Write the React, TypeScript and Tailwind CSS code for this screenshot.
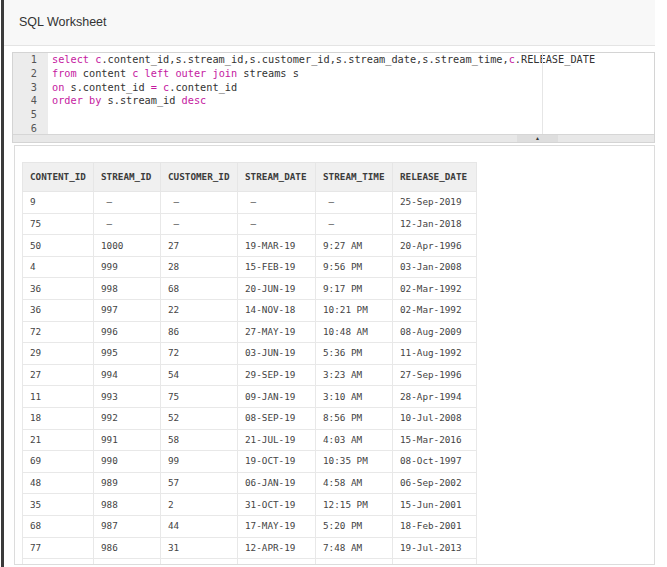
import React from 'react';

const rows: string[][] = [
    ['9', '-', '-', '-', '-', '25-Sep-2019'],
    ['75', '-', '-', '-', '-', '12-Jan-2018'],
    ['50', '1000', '27', '19-MAR-19', '9:27 AM', '20-Apr-1996'],
    ['4', '999', '28', '15-FEB-19', '9:56 PM', '03-Jan-2008'],
    ['36', '998', '68', '20-JUN-19', '9:17 PM', '02-Mar-1992'],
    ['36', '997', '22', '14-NOV-18', '10:21 PM', '02-Mar-1992'],
    ['72', '996', '86', '27-MAY-19', '10:48 AM', '08-Aug-2009'],
    ['29', '995', '72', '03-JUN-19', '5:36 PM', '11-Aug-1992'],
    ['27', '994', '54', '29-SEP-19', '3:23 AM', '27-Sep-1996'],
    ['11', '993', '75', '09-JAN-19', '3:10 AM', '28-Apr-1994'],
    ['18', '992', '52', '08-SEP-19', '8:56 PM', '10-Jul-2008'],
    ['21', '991', '58', '21-JUL-19', '4:03 AM', '15-Mar-2016'],
    ['69', '990', '99', '19-OCT-19', '10:35 PM', '08-Oct-1997'],
    ['48', '989', '57', '06-JAN-19', '4:58 AM', '06-Sep-2002'],
    ['35', '988', '2', '31-OCT-19', '12:15 PM', '15-Jun-2001'],
    ['68', '987', '44', '17-MAY-19', '5:20 PM', '18-Feb-2001'],
    ['77', '986', '31', '12-APR-19', '7:48 AM', '19-Jul-2013'],
    ['', '', '', '', '', ''],
];

const headers = ['CONTENT_ID', 'STREAM_ID', 'CUSTOMER_ID', 'STREAM_DATE', 'STREAM_TIME', 'RELEASE_DATE'];
const widths = ['w-[71px]', 'w-[67px]', 'w-[77px]', 'w-[78px]', 'w-[77px]', 'w-[84px]'];

const K = ({ children }: { children: React.ReactNode }) => <span className="text-[#c5199f]">{children}</span>;

function App() {
    const code = [
        <><K>select</K> <K>c</K>.content_id,s.stream_id,s.customer_id,s.stream_date,s.stream_time,<K>c</K>.RELEASE_DATE</>,
        <><K>from</K> content <K>c</K> <K>left</K> <K>outer</K> <K>join</K> streams s</>,
        <><K>on</K> s.content_id <K>=</K> <K>c</K>.content_id</>,
        <><K>order</K> <K>by</K> s.stream_id <K>desc</K></>,
        <></>,
        <></>,
    ];

    return (
        <div className="h-[567px] w-[667px] bg-white flex overflow-hidden">
            <div className="w-[1px]" />
            <div className="w-[3px] bg-[#3b3b3b]" />
            <div className="w-[651px] flex flex-col">
                {/* header */}
                <div className="h-[46px] bg-[#f8f8f8] border-b border-[#e4e4e4] flex items-center pl-[15px] shrink-0">
                    <span className="text-[12.5px] text-[#333] font-['Liberation_Sans',Arial,sans-serif]">SQL Worksheet</span>
                </div>

                {/* editor */}
                <div className="ml-[8px] mt-[6px] border border-[#d4d4d4] flex flex-col shrink-0">
                    <div className="flex relative h-[81px] font-['DejaVu_Sans_Mono',monospace] text-[10.25px] leading-[13.8px]">
                        <div className="w-[35px] bg-[#ececec] text-[#555] text-right pr-[11px]">
                            {code.map((_, i) => (
                                <div key={i}>{i + 1}</div>
                            ))}
                        </div>
                        <div className="flex-1 pl-[4px] text-[#333] whitespace-pre relative">
                            {code.map((c, i) => (
                                <div key={i} className="h-[13.8px]">{c}</div>
                            ))}
                            <div className="absolute top-0 bottom-0 left-[494px] w-px bg-[#e6e6e6]" />
                        </div>
                    </div>
                    <div className="h-[8px] bg-[#e8e8e8] border-t border-[#d6d6d6] flex">
                        <div className="w-[504px]" />
                        <div className="w-[41px] bg-[#dedede] flex items-center justify-center">
                            <span className="text-[5px] leading-none text-[#333]">▲</span>
                        </div>
                    </div>
                </div>

                {/* results */}
                <div className="ml-[10px] mt-[2px] h-[420px] border border-[#dcdcdc] overflow-hidden pl-[7px] pt-[16px] shrink-0">
                    <table className="table-fixed border-collapse font-['DejaVu_Sans_Mono',monospace] text-[9.3px] text-[#444]">
                        <colgroup>
                            {widths.map((w, i) => (
                                <col key={i} className={w} />
                            ))}
                        </colgroup>
                        <thead>
                            <tr className="h-[29px] bg-[#f0f0f0]">
                                {headers.map(h => (
                                    <th key={h} className="border border-[#e6e6e6] text-left font-bold pl-[7px] text-[#3c3c3c]">{h}</th>
                                ))}
                            </tr>
                        </thead>
                        <tbody>
                            {rows.map((r, i) => (
                                <tr key={i} className="h-[21.6px]">
                                    {r.map((c, j) => (
                                        <td key={j} className="border border-[#e8e8e8] pl-[7px] whitespace-pre">
                                            {c === '-' ? ' –' : c}
                                        </td>
                                    ))}
                                </tr>
                            ))}
                        </tbody>
                    </table>
                </div>
            </div>
        </div>
    );
}

export default App;
